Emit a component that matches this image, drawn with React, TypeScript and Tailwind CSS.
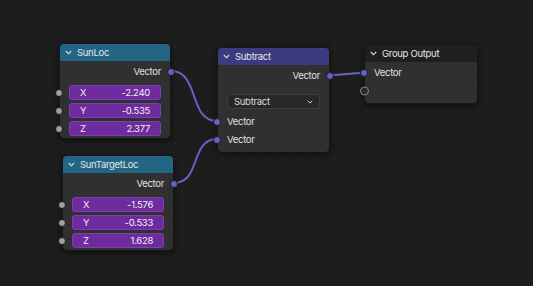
import React from "react";

const font = { fontFamily: "Inter, 'DejaVu Sans', sans-serif" };

function Chevron() {
  return (
    <svg width="7" height="5" viewBox="0 0 7 5" className="shrink-0">
      <polyline points="0.8,1 3.5,3.7 6.2,1" fill="none" stroke="#d8d8d8" strokeWidth="1.1" />
    </svg>
  );
}

function Header({ title, color }: { title: string; color: string }) {
  return (
    <div className={`h-[17px] flex items-center gap-[5px] pl-[5px] rounded-t-[4px] ${color}`}>
      <Chevron />
      <span className="text-[9.5px] tracking-[-0.3px] text-[#e6e6e6] leading-none">{title}</span>
    </div>
  );
}

function VSocket({ side }: { side: "l" | "r" }) {
  return (
    <div
      className={`absolute top-1/2 -translate-y-1/2 w-[8px] h-[8px] rounded-full bg-[#6363c7] border border-[#1a1a1a] ${
        side === "l" ? "left-[-5px]" : "right-[-5px]"
      }`}
    />
  );
}

function GSocket() {
  return (
    <div className="absolute top-1/2 -translate-y-1/2 left-[-5px] w-[8px] h-[8px] rounded-full bg-[#a1a1a1] border border-[#1a1a1a]" />
  );
}

function OutRow({ label }: { label: string }) {
  return (
    <div className="relative h-[16px] flex items-center justify-end pr-[9px]">
      <span className="text-[9.5px] tracking-[-0.3px] text-[#e0e0e0] leading-none">{label}</span>
      <VSocket side="r" />
    </div>
  );
}

function InRow({ label }: { label: string }) {
  return (
    <div className="relative h-[16px] flex items-center pl-[9px]">
      <span className="text-[9.5px] tracking-[-0.3px] text-[#e0e0e0] leading-none">{label}</span>
      <VSocket side="l" />
    </div>
  );
}

function Field({ axis, value }: { axis: string; value: string }) {
  return (
    <div className="relative h-[15px]">
      <GSocket />
      <div className="mx-[9px] h-full flex items-center justify-between pl-[10px] pr-[10px] rounded-[3px] bg-[#6d2b9e] border border-[#7e3db0]">
        <span className="text-[9.5px] tracking-[-0.3px] text-[#ededed] leading-none">{axis}</span>
        <span className="text-[9.5px] tracking-[-0.3px] text-[#f2f2f2] leading-none">{value}</span>
      </div>
    </div>
  );
}

function VectorNode({
  title,
  pos,
  vals,
}: {
  title: string;
  pos: string;
  vals: [string, string, string];
}) {
  return (
    <div className={`absolute ${pos} w-[112px] rounded-[5px] bg-[#303030] border border-[#161616] shadow-[0_2px_6px_rgba(0,0,0,0.5)]`}>
      <Header title={title} color="bg-[#236585]" />
      <div className="pt-[3px] pb-[2px] flex flex-col">
        <OutRow label="Vector" />
        <div className="h-[5px]" />
        <div className="flex flex-col gap-[3px]">
          <Field axis="X" value={vals[0]} />
          <Field axis="Y" value={vals[1]} />
          <Field axis="Z" value={vals[2]} />
        </div>
      </div>
    </div>
  );
}

export default function App() {
  return (
    <div
      className="relative w-[533px] h-[286px] overflow-hidden bg-[#1d1d1d] bg-[radial-gradient(circle,#242424_0.9px,transparent_1.4px)] bg-[length:16px_16px] bg-[position:7px_7px]"
      style={font}
    >
      <svg className="absolute inset-0" width="533" height="286">
        <g fill="none" stroke="#6464c8" strokeWidth="2" strokeLinecap="round">
          <path d="M171,71 C200,71 188,121 217,121" />
          <path d="M174,183 C201,183 190,139 217,139" />
          <path d="M330,75 C347,75 347,73 364,73" />
        </g>
      </svg>

      <VectorNode title="SunLoc" pos="left-[59px] top-[43px]" vals={["-2.240", "-0.535", "2.377"]} />
      <VectorNode title="SunTargetLoc" pos="left-[62px] top-[155px]" vals={["-1.576", "-0.533", "1.628"]} />

      <div className="absolute left-[217px] top-[47px] w-[113px] rounded-[5px] bg-[#303030] border border-[#161616] shadow-[0_2px_6px_rgba(0,0,0,0.5)]">
        <Header title="Subtract" color="bg-[#3c3b82]" />
        <div className="pt-[3px] pb-[4px] flex flex-col">
          <OutRow label="Vector" />
          <div className="h-[10px]" />
          <div className="mx-[9px] h-[15px] flex items-center justify-between pl-[6px] pr-[6px] rounded-[3px] bg-[#282828] border border-[#3e3e3e]">
            <span className="text-[9.5px] tracking-[-0.3px] text-[#dcdcdc] leading-none">Subtract</span>
            <svg width="6" height="4" viewBox="0 0 6 4">
              <polyline points="0.7,0.8 3,3 5.3,0.8" fill="none" stroke="#cfcfcf" strokeWidth="1" />
            </svg>
          </div>
          <div className="h-[5px]" />
          <div className="flex flex-col gap-[2px]">
            <InRow label="Vector" />
            <InRow label="Vector" />
          </div>
        </div>
      </div>

      <div className="absolute left-[364px] top-[44px] w-[114px] rounded-[5px] bg-[#303030] border border-[#161616] shadow-[0_2px_6px_rgba(0,0,0,0.5)]">
        <Header title="Group Output" color="bg-[#1f1f1f]" />
        <div className="pt-[3px] pb-[4px] flex flex-col gap-[2px]">
          <InRow label="Vector" />
          <div className="relative h-[16px]">
            <div className="absolute top-1/2 -translate-y-1/2 left-[-5px] w-[9px] h-[9px] rounded-full border border-[#8a8a8a] bg-[#2a2a2a]" />
          </div>
        </div>
      </div>
    </div>
  );
}
